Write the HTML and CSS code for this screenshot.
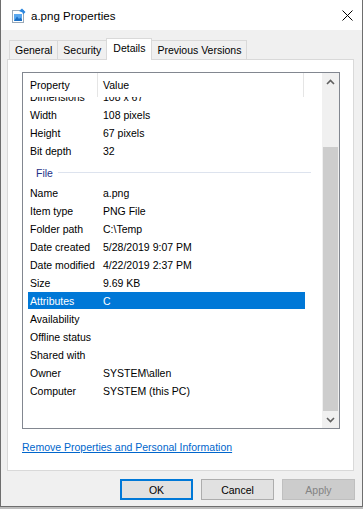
FILE: index.html
```html
<!DOCTYPE html>
<html lang="en">
  <head>
    <meta charset="UTF-8" />
    <title>a.png Properties</title>
    <link rel="stylesheet" href="styles.css">
  </head>
  <body>
    <div class="window">
      <div class="titlebar">
        <svg class="title-icon" width="14" height="15" viewBox="0 0 14 15">
          <rect x="0.5" y="2.5" width="11" height="12" fill="#fff" stroke="#9aa9b8" />
          <rect x="2" y="6" width="8" height="7" fill="#5aa8ef" />
          <path d="M2 13 L5 8.5 L7 11 L8.5 9.5 L10 11.5 L10 13 Z" fill="#1c6fc4" />
          <path d="M7 3 L10 0.5 L13.5 4 L11 6.5 L10.5 4.5 Z" fill="#2b86de" />
        </svg>
        <span class="title">a.png Properties</span>
        <svg class="close" width="11" height="11" viewBox="0 0 11 11">
          <path d="M0.5 0.5 L10.5 10.5 M10.5 0.5 L0.5 10.5" stroke="#000" stroke-width="1" />
        </svg>
      </div>

      <div class="content">
        <div class="tabs">
          <div class="tab">General</div>
          <div class="tab">Security</div>
          <div class="tab selected">Details</div>
          <div class="tab">Previous Versions</div>
        </div>

        <div class="panel">
          <div class="listbox">
            <div class="list">
              <div class="list-head">
                <div class="head-cell head-name">Property</div>
                <div class="head-cell head-value">Value</div>
              </div>
              <div class="list-body">
                <div class="row"><span class="name">Dimensions</span><span class="value">108 x 67</span></div>
                <div class="row"><span class="name">Width</span><span class="value">108 pixels</span></div>
                <div class="row"><span class="name">Height</span><span class="value">67 pixels</span></div>
                <div class="row"><span class="name">Bit depth</span><span class="value">32</span></div>
                <div class="group"><span>File</span><span class="group-line"></span></div>
                <div class="row"><span class="name">Name</span><span class="value">a.png</span></div>
                <div class="row"><span class="name">Item type</span><span class="value">PNG File</span></div>
                <div class="row"><span class="name">Folder path</span><span class="value">C:\Temp</span></div>
                <div class="row"><span class="name">Date created</span><span class="value">5/28/2019 9:07 PM</span></div>
                <div class="row"><span class="name">Date modified</span><span class="value">4/22/2019 2:37 PM</span></div>
                <div class="row"><span class="name">Size</span><span class="value">9.69 KB</span></div>
                <div class="row selected"><span class="name">Attributes</span><span class="value">C</span></div>
                <div class="row"><span class="name">Availability</span><span class="value"></span></div>
                <div class="row"><span class="name">Offline status</span><span class="value"></span></div>
                <div class="row"><span class="name">Shared with</span><span class="value"></span></div>
                <div class="row"><span class="name">Owner</span><span class="value">SYSTEM\allen</span></div>
                <div class="row"><span class="name">Computer</span><span class="value">SYSTEM (this PC)</span></div>
              </div>
            </div>
            <div class="scrollbar">
              <div class="scroll-btn">
                <svg width="9" height="6" viewBox="0 0 9 6"><path d="M1 5 L4.5 1.5 L8 5" fill="none" stroke="#606060" stroke-width="1.6" /></svg>
              </div>
              <div class="scroll-track"><div class="scroll-thumb"></div></div>
              <div class="scroll-btn">
                <svg width="9" height="6" viewBox="0 0 9 6"><path d="M1 1 L4.5 4.5 L8 1" fill="none" stroke="#606060" stroke-width="1.6" /></svg>
              </div>
            </div>
          </div>
          <a class="link" href="#">Remove Properties and Personal Information</a>
        </div>

        <div class="buttons">
          <button class="btn default">OK</button>
          <button class="btn">Cancel</button>
          <button class="btn disabled">Apply</button>
        </div>
      </div>
    </div>
  </body>
</html>
```

FILE: styles.css
```css
* {
  box-sizing: border-box;
}
body {
  margin: 0;
  background-color: #bdbdbd;
  font-family: "Liberation Sans", Arial, sans-serif;
  font-size: 10.5px;
  color: #000;
}
.window {
  width: 363px;
  height: 507px;
  background-color: #f0f0f0;
  border: 1px solid #6e6e6e;
  border-top: none;
  display: flex;
  flex-direction: column;
}
.titlebar {
  height: 30px;
  flex-shrink: 0;
  background-color: #fff;
  display: flex;
  align-items: center;
  padding-left: 11px;
}
.title-icon {
  margin-right: 5px;
}
.title {
  flex: 1;
  font-size: 11.5px;
  padding-top: 1px;
}
.close {
  margin-right: 9px;
}
.content {
  flex: 1;
  padding-top: 8px;
  display: flex;
  flex-direction: column;
}
.tabs {
  position: relative;
  z-index: 1;
  display: flex;
  align-items: flex-end;
  height: 21px;
  padding-left: 8px;
}
.tab {
  height: 19px;
  line-height: 18px;
  padding: 0 5px;
  border: 1px solid #d9d9d9;
  border-bottom: none;
  background-color: #f0f0f0;
  margin-right: -1px;
  white-space: nowrap;
}
.tab.selected {
  height: 22px;
  line-height: 19px;
  padding: 0 6px;
  background-color: #fff;
  margin-bottom: -1px;
}
.panel {
  margin: 0 8px 0 6px;
  height: 412px;
  background-color: #fff;
  border: 1px solid #d9d9d9;
  padding: 12px 0 0 14px;
}
.listbox {
  width: 318px;
  height: 357px;
  border: 1px solid #828790;
  display: flex;
}
.list {
  flex: 1;
  min-width: 0;
  display: flex;
  flex-direction: column;
}
.list-head {
  height: 24px;
  flex-shrink: 0;
  display: flex;
}
.head-cell {
  line-height: 24px;
  border-right: 1px solid #e5e5e5;
}
.head-name {
  width: 75px;
  padding-left: 7px;
}
.head-value {
  width: 206px;
  padding-left: 5px;
}
.list-body {
  flex: 1;
  overflow: hidden;
}
.row {
  display: flex;
  width: 277px;
  height: 17px;
  line-height: 18px;
  margin: 0 0 1px 5px;
  white-space: nowrap;
}
.row:first-child {
  margin-top: -9px;
}
.row .name {
  width: 70px;
  padding-left: 2px;
}
.row .value {
  padding-left: 5px;
}
.row.selected {
  background-color: #0078d7;
  color: #fff;
}
.group {
  display: flex;
  align-items: center;
  width: 283px;
  height: 24px;
  margin-left: 5px;
  padding: 1px 0 0 8px;
  color: #1e3287;
}
.group-line {
  flex: 1;
  height: 1px;
  margin: -1px 0 0 5px;
  background-color: #dde3ee;
}
.scrollbar {
  width: 17px;
  display: flex;
  flex-direction: column;
  background-color: #f0f0f0;
}
.scroll-btn {
  height: 17px;
  flex-shrink: 0;
  display: flex;
  align-items: center;
  justify-content: center;
}
.scroll-track {
  flex: 1;
  display: flex;
  flex-direction: column;
  padding-top: 57px;
}
.scroll-thumb {
  flex: 1;
  margin: 0 1px;
  background-color: #cdcdcd;
}
.link {
  display: inline-block;
  margin-top: 11px;
  line-height: 14px;
  color: #0066cc;
  text-decoration: underline;
}
.buttons {
  display: flex;
  justify-content: flex-end;
  gap: 8px;
  margin-top: 8px;
  padding-right: 7px;
}
.btn {
  width: 73px;
  height: 21px;
  padding: 0;
  border: 1px solid #adadad;
  background-color: #e1e1e1;
  font-family: inherit;
  font-size: 10.5px;
  color: #000;
}
.btn.default {
  border: 2px solid #0078d7;
}
.btn.disabled {
  background-color: #cccccc;
  border-color: #bfbfbf;
  color: #838383;
}
```
